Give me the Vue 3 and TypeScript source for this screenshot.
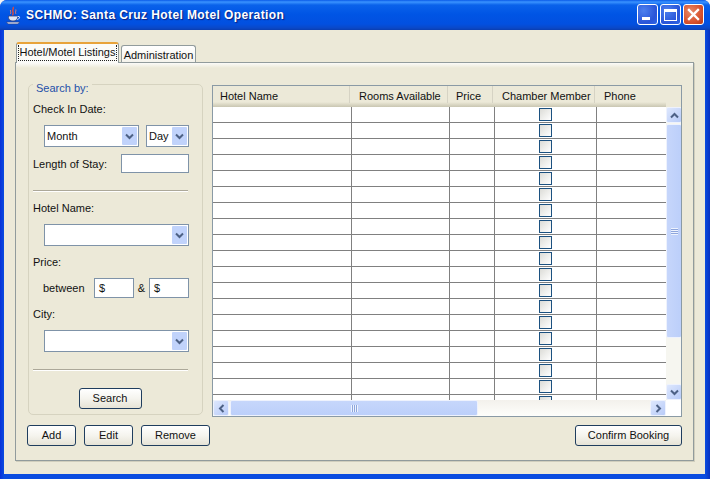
<script setup lang="ts">
const rows: number[] = Array.from({ length: 19 }, (_, i) => i)
const headers = [
  { label: 'Hotel Name', cls: 'h1' },
  { label: 'Rooms Available', cls: 'h2' },
  { label: 'Price', cls: 'h3' },
  { label: 'Chamber Member', cls: 'h4' },
  { label: 'Phone', cls: 'h5' },
]
</script>

<template>
  <div class="window">
    <header class="titlebar">
      <svg class="app-icon" width="15" height="20" viewBox="0 0 15 20">
        <path d="M7 1c1.500 1.500-1.500 3 0 5 1 1.500-1 2 0 3.500" fill="none" stroke="#e04a3a" stroke-width="1.400" />
        <path d="M4.500 4c-.5 1.200.8 2 0 3.800M9.800 3.500c.5 1.200-.8 2.300 0 4.300" fill="none" stroke="#e8836f" stroke-width="1" />
        <path d="M2.500 10h9v1.500c0 2.200-1.700 3.500-4.500 3.500s-4.500-1.300-4.500-3.500z" fill="#dfe6f5" stroke="#33427e" stroke-width=".8" />
        <path d="M11.500 10.500h1.500c1 0 1 2.500-1.800 3" fill="none" stroke="#dfe6f5" stroke-width="1" />
        <path d="M.5 16h13l-1.500 2h-10z" fill="#c9d3ee" stroke="#33427e" stroke-width=".6" />
      </svg>
      <span class="title">SCHMO: Santa Cruz Hotel Motel Operation</span>
      <div class="win-buttons">
        <button class="wbtn blue" aria-label="Minimize"><span class="min-glyph"></span></button>
        <button class="wbtn blue" aria-label="Maximize"><span class="max-glyph"></span></button>
        <button class="wbtn red" aria-label="Close">
          <svg width="13" height="13" viewBox="0 0 13 13"><path d="M2 2l9 9M11 2l-9 9" stroke="#fff" stroke-width="2.400" stroke-linecap="square" /></svg>
        </button>
      </div>
    </header>

    <div class="client">
      <div class="tabs">
        <div class="tab active"><span class="tab-focus">Hotel/Motel Listings</span></div>
        <div class="tab">Administration</div>
      </div>

      <div class="pane">
        <div class="main">
          <section class="search">
            <span class="legend">Search by:</span>
            <div class="lbl first">Check In Date:</div>
            <div class="indent date-row">
              <div class="combo month">
                <span class="combo-text">Month</span>
                <span class="arrow"><svg width="9" height="7" viewBox="0 0 9 7"><path d="M1 1.500l3.500 3.500 3.500-3.500" fill="none" stroke="#4d6185" stroke-width="2" /></svg></span>
              </div>
              <div class="combo day">
                <span class="combo-text">Day</span>
                <span class="arrow"><svg width="9" height="7" viewBox="0 0 9 7"><path d="M1 1.500l3.500 3.500 3.500-3.500" fill="none" stroke="#4d6185" stroke-width="2" /></svg></span>
              </div>
            </div>
            <div class="stay-row">
              <span class="stay-label">Length of Stay:</span>
              <div class="field stay"></div>
            </div>
            <hr class="sep sep1" />
            <div class="lbl hotel">Hotel Name:</div>
            <div class="indent">
              <div class="combo wide">
                <span class="combo-text"></span>
                <span class="arrow"><svg width="9" height="7" viewBox="0 0 9 7"><path d="M1 1.500l3.500 3.500 3.500-3.500" fill="none" stroke="#4d6185" stroke-width="2" /></svg></span>
              </div>
            </div>
            <div class="lbl price">Price:</div>
            <div class="price-row">
              <span class="between">between</span>
              <div class="field money">$</div>
              <span class="amp">&amp;</span>
              <div class="field money">$</div>
            </div>
            <div class="lbl city">City:</div>
            <div class="indent">
              <div class="combo wide">
                <span class="combo-text"></span>
                <span class="arrow"><svg width="9" height="7" viewBox="0 0 9 7"><path d="M1 1.500l3.500 3.500 3.500-3.500" fill="none" stroke="#4d6185" stroke-width="2" /></svg></span>
              </div>
            </div>
            <hr class="sep sep2" />
            <div class="search-row"><button class="btn search-btn">Search</button></div>
          </section>

          <section class="grid-frame">
            <div class="thead">
              <div class="thead-row">
                <div v-for="h in headers" :key="h.label" class="th" :class="h.cls">{{ h.label }}</div>
              </div>
            </div>
            <div class="grid-mid">
              <div class="tbody">
                <div v-for="r in rows" :key="r" class="tr">
                  <div class="td c1"></div>
                  <div class="td c2"></div>
                  <div class="td c3"></div>
                  <div class="td c4"><span class="check"></span></div>
                  <div class="td c5"></div>
                </div>
              </div>
              <div class="vscroll">
                <div class="sb-btn">
                  <svg width="9" height="7" viewBox="0 0 9 7"><path d="M1 5.500l3.500-3.500 3.500 3.500" fill="none" stroke="#4d6185" stroke-width="2" /></svg>
                </div>
                <div class="vthumb"><span class="grip-v"></span></div>
                <div class="vspace"></div>
                <div class="sb-btn">
                  <svg width="9" height="7" viewBox="0 0 9 7"><path d="M1 1.500l3.500 3.500 3.500-3.500" fill="none" stroke="#4d6185" stroke-width="2" /></svg>
                </div>
              </div>
            </div>
            <div class="hscroll">
              <div class="sb-btn">
                <svg width="7" height="9" viewBox="0 0 7 9"><path d="M5.500 1l-3.500 3.500 3.500 3.500" fill="none" stroke="#4d6185" stroke-width="2" /></svg>
              </div>
              <div class="hthumb"><span class="grip-h"></span></div>
              <div class="hspace"></div>
              <div class="sb-btn">
                <svg width="7" height="9" viewBox="0 0 7 9"><path d="M1.500 1l3.500 3.500-3.500 3.500" fill="none" stroke="#4d6185" stroke-width="2" /></svg>
              </div>
            </div>
          </section>
        </div>

        <div class="actions">
          <button class="btn add">Add</button>
          <button class="btn edit">Edit</button>
          <button class="btn remove">Remove</button>
          <button class="btn confirm">Confirm Booking</button>
        </div>
      </div>
    </div>
  </div>
</template>

<style>
html, body { margin: 0; background: #f4f4f4; overflow: hidden; }
</style>

<style scoped>
.window {
  width: 710px;
  height: 479px;
  display: flex;
  flex-direction: column;
  box-sizing: border-box;
  border-radius: 7px 7px 0 0;
  background: linear-gradient(90deg, #0831d9 0, #0a4ce0 4px, #0a4ce0 705px, #0831c0 710px);
  font-family: "Liberation Sans", "DejaVu Sans", sans-serif;
  font-size: 11px;
  color: #111;
  overflow: hidden;
}
.titlebar {
  height: 30px;
  flex: none;
  display: flex;
  align-items: center;
  padding: 0 6px 0 6px;
  box-sizing: border-box;
  background: linear-gradient(180deg, #0a5ae8 0, #3a93ff 2px, #0a62ea 5px, #0055e5 14px, #0250e0 24px, #0a48c8 28px, #0a3db0 30px);
}
.app-icon { flex: none; margin-right: 5px; margin-top: 1px; }
.title {
  font-family: "Liberation Sans", "DejaVu Sans", sans-serif;
  font-weight: 700;
  font-size: 12px;
  color: #fff;
  text-shadow: 1px 1px 1px #0f1e7a;
  letter-spacing: 0.4px;
  white-space: nowrap;
}
.win-buttons { margin-left: auto; display: flex; gap: 2px; margin-top: -1px; }
.wbtn {
  width: 21px;
  height: 21px;
  padding: 0;
  box-sizing: border-box;
  border: 1px solid #fff;
  border-radius: 3px;
  display: flex;
  align-items: center;
  justify-content: center;
  position: relative;
}
.blue { background: radial-gradient(circle at 30% 30%, #4d80ee, #2a55d8 65%, #2c66e8); }
.red { background: radial-gradient(circle at 35% 35%, #e88a68, #d8532f 60%, #b93a16); }
.min-glyph { width: 8px; height: 3px; background: #fff; position: absolute; left: 4px; bottom: 4px; }
.max-glyph { width: 13px; height: 12px; box-sizing: border-box; border: 1px solid #fff; border-top-width: 3px; }

.client {
  flex: 1;
  margin: 0 5px 5px 4px;
  background: #ece9d8;
  padding: 12px 11px 13px 11px;
  display: flex;
  flex-direction: column;
  min-height: 0;
}
.tabs { display: flex; align-items: flex-end; height: 20px; flex: none; padding-left: 1px; gap: 2px; position: relative; z-index: 1; }
.tab {
  height: 17px;
  line-height: 18px;
  width: 75px;
  box-sizing: border-box;
  text-align: center;
  background: linear-gradient(180deg, #fff, #f4f3ec);
  border: 1px solid #919b9c;
  border-bottom: none;
  border-radius: 3px 3px 0 0;
  white-space: nowrap;
}
.tab.active {
  height: 21px;
  margin-bottom: -1px;
  width: 103px;
  background: #fbfbf8;
  border-top: 2px solid #e8a33a;
  padding: 1px 1px 0;
  line-height: 15px;
}
.tab-focus {
  display: block;
  height: 16px;
  line-height: 15px;
  box-sizing: border-box;
  border: 1px dotted #222;
  border-top: none;
}
.pane {
  flex: 1;
  border: 1px solid #919b9c;
  background: linear-gradient(180deg, #fbfbf8 0, #ece9d8 5px);
  padding: 21px 10px 0 12px;
  min-height: 0;
  box-shadow: 1px 1px 0 #d0cebd;
}
.main { display: flex; align-items: flex-start; gap: 9px; height: 341px; box-sizing: border-box; }
.search {
  width: 175px;
  height: 331px;
  flex: none;
  box-sizing: border-box;
  border: 1px solid #d6d3c0;
  border-radius: 5px;
  position: relative;
  padding: 0 4px;
}
.legend {
  position: absolute;
  left: 4px;
  top: -4px;
  padding: 0 3px;
  background: #ece9d8;
  color: #2450a8;
  line-height: 15px;
}
.lbl { line-height: 16px; }
.lbl.first { margin-top: 16px; }
.indent { padding-left: 11px; }
.date-row { display: flex; gap: 7px; margin-top: 8px; }
.combo {
  height: 22px;
  box-sizing: border-box;
  border: 1px solid #7f93a8;
  background: #fff;
  display: flex;
  align-items: stretch;
  padding: 1px;
}
.combo.month { width: 95px; }
.combo.day { width: 43px; }
.combo.wide { width: 145px; }
.combo-text { flex: 1; line-height: 18px; padding-left: 1px; white-space: nowrap; overflow: hidden; }
.arrow {
  width: 15px;
  flex: none;
  background: #c1d3fb;
  display: flex;
  align-items: center;
  justify-content: center;
  border-radius: 1px;
}
.stay-row { display: flex; align-items: center; margin-top: 7px; height: 19px; }
.stay-label { width: 88px; }
.field {
  height: 19px;
  box-sizing: border-box;
  border: 1px solid #7f93a8;
  background: #fff;
  line-height: 17px;
  padding-left: 4px;
}
.stay { width: 68px; }
.sep {
  width: 155px;
  height: 0;
  margin: 0;
  border: none;
  border-top: 1px solid #aca899;
  border-bottom: 1px solid #fff;
}
.sep1 { margin-top: 17px; }
.lbl.hotel { margin-top: 8px; }
.lbl.hotel + .indent { margin-top: 8px; }
.lbl.price { margin-top: 8px; }
.price-row { display: flex; align-items: center; margin-top: 8px; height: 20px; padding-left: 10px; }
.between { width: 51px; }
.money { width: 40px; height: 20px; line-height: 18px; }
.amp { width: 15px; text-align: center; }
.lbl.city { margin-top: 8px; }
.lbl.city + .indent { margin-top: 8px; }
.sep2 { margin-top: 17px; }
.search-row { display: flex; justify-content: center; margin-top: 17px; padding-right: 11px; }
.btn {
  height: 21px;
  padding: 0 0 1px;
  box-sizing: border-box;
  border: 1px solid #1f3d5e;
  border-radius: 3px;
  background: linear-gradient(180deg, #fff 0, #f5f4ee 50%, #e6e3d6 100%);
  font: inherit;
  color: #111;
  white-space: nowrap;
}
.search-btn { width: 63px; }

.grid-frame {
  width: 470px;
  height: 332px;
  flex: none;
  margin-top: 1px;
  box-sizing: border-box;
  border: 1px solid #8a9aa5;
  display: flex;
  flex-direction: column;
  background: #fff;
  overflow: hidden;
}
.thead {
  height: 21px;
  flex: none;
  background: #ece9d8;
}
.thead-row {
  width: 453px;
  height: 21px;
  display: flex;
  background: linear-gradient(180deg, #ece9d8 0, #ece9d8 16px, #dedbc8 18px, #c9c6b2 21px);
}
.th {
  box-sizing: border-box;
  height: 17px;
  line-height: 20px;
  border-right: 1px solid #d6d3c4;
  white-space: nowrap;
}
.h1 { width: 137px; padding-left: 7px; }
.h2 { width: 98px; padding-left: 9px; }
.h3 { width: 45px; padding-left: 8px; }
.h4 { width: 102px; padding-left: 9px; }
.h5 { flex: 1; padding-left: 9px; border-right: none; }
.grid-mid { display: flex; height: 293px; flex: none; }
.tbody { width: 453px; flex: none; overflow: hidden; background: #fff; }
.tr { display: flex; height: 16px; box-sizing: border-box; border-bottom: 1px solid #808080; }
.td { box-sizing: border-box; border-right: 1px solid #808080; height: 15px; display: flex; justify-content: center; }
.c1 { width: 139px; }
.c2 { width: 98px; }
.c3 { width: 45px; }
.c4 { width: 102px; }
.c5 { flex: 1; border-right: none; }
.check {
  width: 13px;
  height: 13px;
  margin-top: 1px;
  box-sizing: border-box;
  border: 1px solid #1c5180;
  background: linear-gradient(135deg, #dcdcd7, #fff);
}
.vscroll {
  width: 16px;
  flex: none;
  display: flex;
  flex-direction: column;
  background: #f6f6f0;
  box-sizing: border-box;
}
.hscroll {
  height: 16px;
  width: 453px;
  flex: none;
  display: flex;
  background: linear-gradient(180deg, #f3f1ec, #fefefb);
}
.sb-btn {
  width: 16px;
  height: 16px;
  flex: none;
  box-sizing: border-box;
  border: 1px solid #eef2fd;
  border-radius: 2px;
  background: linear-gradient(135deg, #dde7fd, #b8cbf8);
  display: flex;
  align-items: center;
  justify-content: center;
}
.vthumb {
  height: 214px;
  margin-top: 1px;
  box-sizing: border-box;
  border: 1px solid #eef2fd;
  border-radius: 2px;
  background: linear-gradient(90deg, #c6d6fb, #bccffa);
  display: flex;
  align-items: center;
  justify-content: center;
}
.vspace { flex: 1; }
.grip-v { width: 7px; height: 7px; background: repeating-linear-gradient(180deg, #eef3fe 0 1px, #8ea6dc 1px 2px); }
.hthumb {
  width: 248px;
  margin-left: 1px;
  box-sizing: border-box;
  border: 1px solid #eef2fd;
  border-radius: 2px;
  background: linear-gradient(180deg, #c6d6fb, #bccffa);
  display: flex;
  align-items: center;
  justify-content: center;
}
.hspace { flex: 1; }
.grip-h { width: 7px; height: 7px; background: repeating-linear-gradient(90deg, #eef3fe 0 1px, #8ea6dc 1px 2px); }

.actions { display: flex; margin-left: -1px; margin-right: 1px; }
.add { width: 49px; }
.edit { width: 49px; margin-left: 8px; }
.remove { width: 69px; margin-left: 8px; }
.confirm { width: 107px; margin-left: auto; }
</style>
